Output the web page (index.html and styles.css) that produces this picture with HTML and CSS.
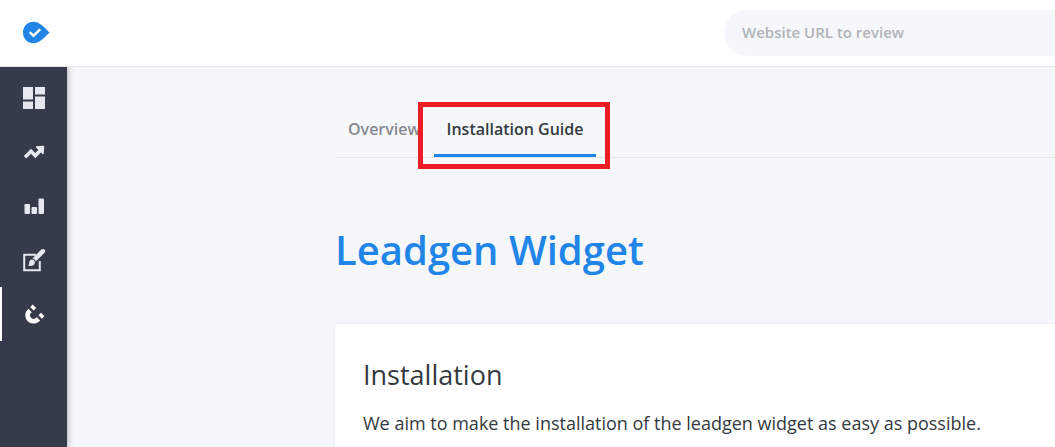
FILE: index.html
```html
<!DOCTYPE html>
<html lang="en">
<head>
    <meta charset="UTF-8">
    <meta name="viewport" content="width=device-width, initial-scale=1.0">
    <title>Leadgen Widget</title>
    <link rel="stylesheet" href="styles.css">
</head>
<body>
    <header class="topbar">
        <a href="#" class="logo" aria-label="Home">
            <svg width="28" height="24" viewBox="0 0 28 24">
                <path d="M11.500 .8C17 .8 21 5 27.500 11.500C21 18 17 22.300 11.500 22.300C5.500 22.300 1 17.500 1 11.500S5.500 .8 11.500 .8Z" fill="#2185e8"/>
                <path d="M8.500 11.800l3 3 6-6" fill="none" stroke="#fff" stroke-width="2.5" stroke-linecap="round" stroke-linejoin="round"/>
            </svg>
        </a>
        <input type="text" class="search" placeholder="Website URL to review" aria-label="Website URL to review">
    </header>

    <div class="layout">
        <nav class="sidebar">
            <a href="#" class="nav-item" aria-label="Dashboard">
                <svg width="24" height="24" viewBox="0 0 24 24" fill="currentColor">
                    <path d="M1 1h10v12.500H1zM13 1h10v7.500H13zM1 15.500h10V23H1zM13 10.500h10V23H13z"/>
                </svg>
            </a>
            <a href="#" class="nav-item" aria-label="Trends">
                <svg width="24" height="24" viewBox="0 0 24 24" fill="currentColor">
                    <path d="M3 17.300l6-6 4.300 4.300 6-6.200" fill="none" stroke="currentColor" stroke-width="3.600"/>
                    <path d="M14.500 7l7-.5-.5 7z" stroke="currentColor" stroke-width="1.500" stroke-linejoin="round"/>
                </svg>
            </a>
            <a href="#" class="nav-item" aria-label="Reports">
                <svg width="24" height="24" viewBox="0 0 24 24" fill="currentColor">
                    <rect x="2.500" y="10" width="5.500" height="10" rx="1"/>
                    <rect x="9.500" y="13" width="5.500" height="7" rx="1"/>
                    <rect x="16.500" y="4.500" width="5.500" height="15.500" rx="1"/>
                </svg>
            </a>
            <a href="#" class="nav-item" aria-label="Editor">
                <svg width="24" height="24" viewBox="0 0 24 24" fill="currentColor">
                    <path d="M14 6.700H2.200v15.600h15.600V13" fill="none" stroke="currentColor" stroke-width="2"/>
                    <path d="M10.500 10.500L19 1.800c1.200-1.100 2.800-1.100 3.600-.3s.8 2.400-.3 3.600L13.800 13.500c-.3-1.500-1.500-2.700-3.300-3z"/>
                    <path d="M9.800 11.500c1.900 0 3.300 1.400 3.100 3.300C12.500 17.700 9 18.700 5.800 17.600c1.500-.6 1-2 1.500-3.700.4-1.400 1.200-2.300 2.500-2.400z"/>
                </svg>
            </a>
            <a href="#" class="nav-item active" aria-label="Leadgen widget">
                <svg width="24" height="24" viewBox="0 0 24 24" fill="none" stroke="currentColor" stroke-width="4.800">
                    <path d="M8.100 8.500L7 9.600a5.900 5.900 0 0 0 8.300 8.300L16.400 16.800"/>
                    <path d="M9.900 6.700L12.400 4.200M18.200 15L20.700 12.500"/>
                </svg>
            </a>
        </nav>

        <main class="content">
            <nav class="tabs">
                <a href="#" class="tab">Overview</a>
                <a href="#" class="tab active">Installation Guide</a>
            </nav>
            <h1>Leadgen Widget</h1>
            <section class="card">
                <h2>Installation</h2>
                <p>We aim to make the installation of the leadgen widget as easy as possible.</p>
            </section>
        </main>
    </div>
</body>
</html>
```

FILE: styles.css
```css
* {
    box-sizing: border-box;
}

body {
    display: flex;
    flex-direction: column;
    min-height: 100vh;
    margin: 0;
    background: #f5f7fb;
    color: #343a40;
    font-family: "Open Sans", "Noto Sans", sans-serif;
}

.topbar {
    display: flex;
    align-items: center;
    justify-content: space-between;
    padding: 10px 0 10px 22px;
    background: #fff;
    border-bottom: 1px solid #e6e7eb;
}

.logo {
    display: flex;
}

.search {
    width: 331px;
    height: 46px;
    padding: 0 18px 2px;
    border: none;
    border-radius: 23px 0 0 23px;
    background: #f5f7fb;
    font: 600 15px "Open Sans", "Noto Sans", sans-serif;
    outline: none;
}

.search::placeholder {
    color: #b0b3b9;
    opacity: 1;
}

.layout {
    display: flex;
    flex: 1;
}

.sidebar {
    flex: 0 0 67px;
    padding-top: 4px;
    background: #363b49;
    box-shadow: 1px 0 6px rgba(0, 0, 0, 0.3);
    clip-path: inset(0 -12px 0 0);
}

.nav-item {
    display: flex;
    align-items: center;
    justify-content: center;
    height: 54px;
    border: solid transparent;
    border-width: 0 2px;
    color: #e5e8ee;
}

.nav-item.active {
    border-left-color: #fff;
    color: #fff;
}

.content {
    display: flex;
    flex: 1;
    flex-direction: column;
    min-width: 0;
    padding: 38px 0 0 268px;
}

.tabs {
    display: flex;
    border-bottom: 1px solid #e4e6ea;
}

.tab {
    position: relative;
    padding: 13px 13px 14px;
    border-bottom: 3px solid transparent;
    color: #868990;
    font-size: 16px;
    font-weight: 600;
    line-height: 22px;
    text-decoration: none;
}

.tab.active {
    border-bottom-color: #2185e8;
    color: #343a40;
}

/* highlight frame around the current tab */
.tab.active::after {
    content: "";
    position: absolute;
    inset: -3px -14px -15px -16px;
    border: 5px solid #ee1c25;
}

h1 {
    margin: 64px 0 46px;
    color: #2185e8;
    font-size: 40px;
    font-weight: 600;
    line-height: 56px;
}

.card {
    flex: 1;
    padding: 32px 28px 8px;
    border-radius: 3px 0 0 0;
    background: #fff;
    box-shadow: 0 0 4px rgba(0, 0, 0, 0.06);
}

h2 {
    margin: 0 0 14px;
    font-size: 27px;
    font-weight: 400;
    line-height: 38px;
}

.card p {
    margin: 0;
    font-size: 18px;
    line-height: 30px;
}
```
